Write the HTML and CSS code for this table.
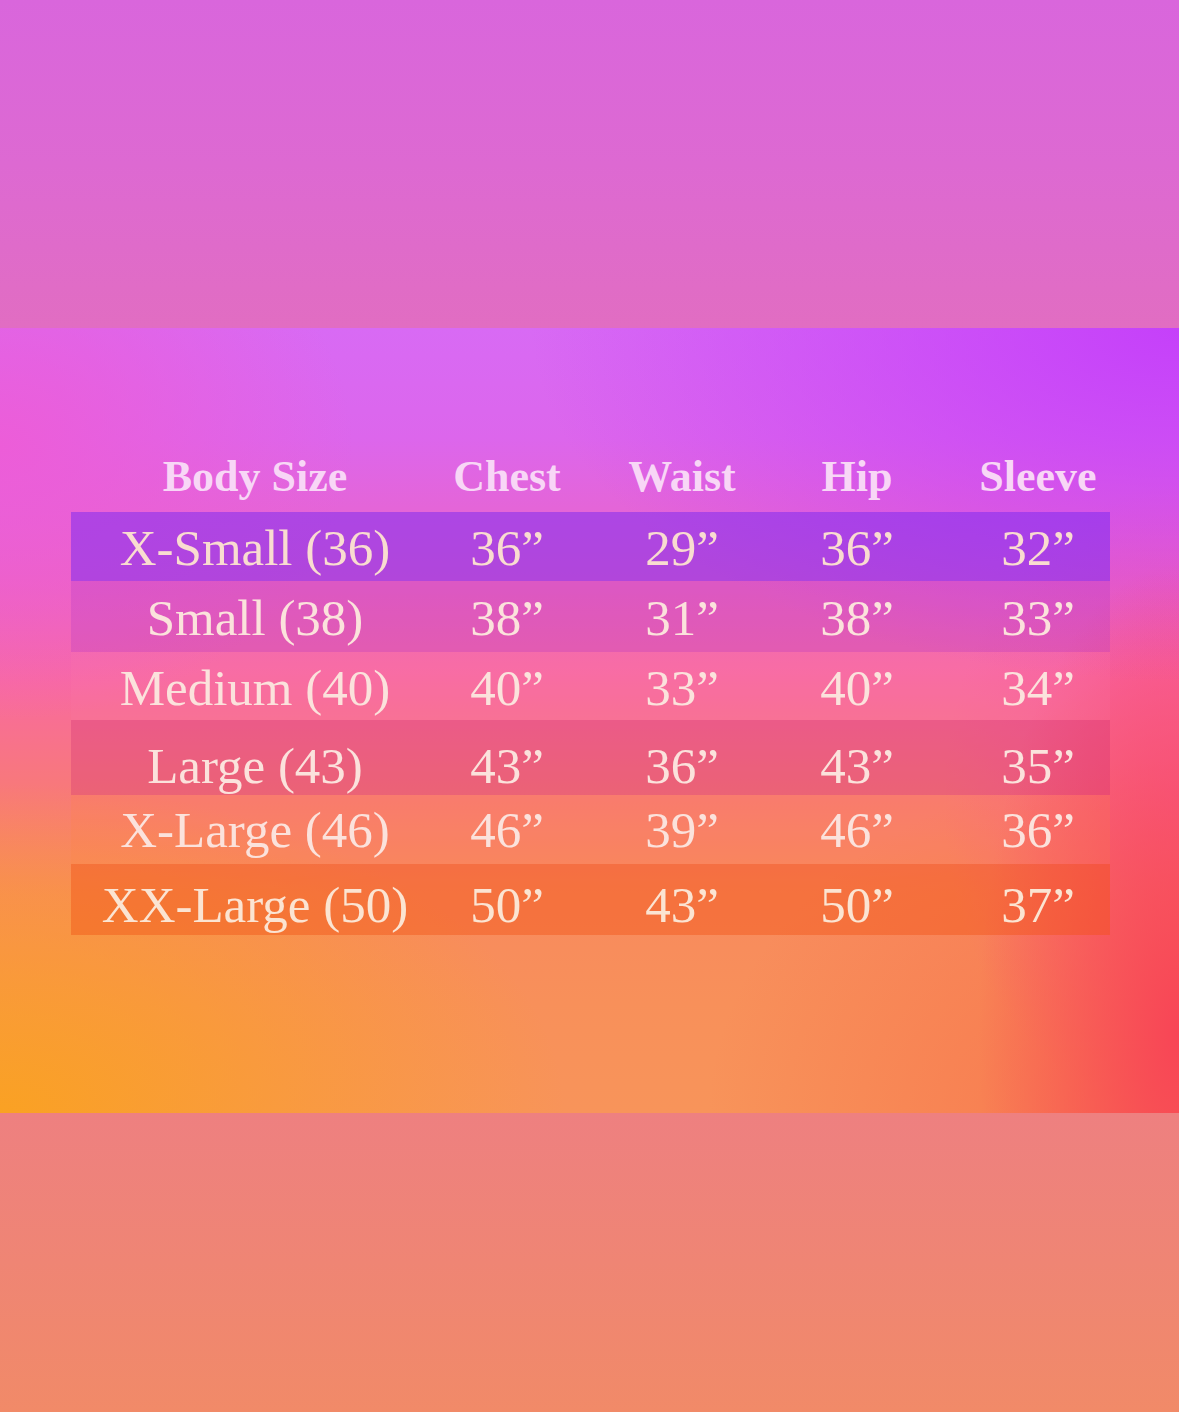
FILE: index.html
```html
<!DOCTYPE html>
<html lang="en">
<head>
<meta charset="utf-8">
<title>Size Chart</title>
<link rel="stylesheet" href="styles.css">
</head>
<body>
<div class="band band-top"></div>
<section class="chart">
  <div class="table">
    <div class="row head">
      <div class="cell">Body Size</div>
      <div class="cell">Chest</div>
      <div class="cell">Waist</div>
      <div class="cell">Hip</div>
      <div class="cell last">Sleeve</div>
    </div>
    <div class="row r1">
      <div class="cell">X-Small (36)</div>
      <div class="cell">36”</div>
      <div class="cell">29”</div>
      <div class="cell">36”</div>
      <div class="cell last">32”</div>
    </div>
    <div class="row r2">
      <div class="cell">Small (38)</div>
      <div class="cell">38”</div>
      <div class="cell">31”</div>
      <div class="cell">38”</div>
      <div class="cell last">33”</div>
    </div>
    <div class="row r3">
      <div class="cell">Medium (40)</div>
      <div class="cell">40”</div>
      <div class="cell">33”</div>
      <div class="cell">40”</div>
      <div class="cell last">34”</div>
    </div>
    <div class="row r4">
      <div class="cell">Large (43)</div>
      <div class="cell">43”</div>
      <div class="cell">36”</div>
      <div class="cell">43”</div>
      <div class="cell last">35”</div>
    </div>
    <div class="row r5">
      <div class="cell">X-Large (46)</div>
      <div class="cell">46”</div>
      <div class="cell">39”</div>
      <div class="cell">46”</div>
      <div class="cell last">36”</div>
    </div>
    <div class="row r6">
      <div class="cell">XX-Large (50)</div>
      <div class="cell">50”</div>
      <div class="cell">43”</div>
      <div class="cell">50”</div>
      <div class="cell last">37”</div>
    </div>
  </div>
</section>
<div class="band band-bottom"></div>
</body>
</html>
```

FILE: styles.css
```css
html, body {
  margin: 0;
  padding: 0;
}
body {
  width: 1179px;
  font-family: "Liberation Serif", "Times New Roman", serif;
  background: #e87a90;
}
.band-top {
  height: 328px;
  background: linear-gradient(180deg, #d966dc 0%, #dd69d2 50%, #e16dc2 100%);
}
.band-bottom {
  height: 299px;
  background: linear-gradient(180deg, #ee8080 0%, #ef8574 50%, #f18a68 100%);
}
.chart {
  height: 785px;
  box-sizing: border-box;
  padding: 124px 0 0 71px;
  background:
    radial-gradient(ellipse 17% 60% at 100% 90%, rgba(248, 66, 86, 0.95), rgba(248, 66, 86, 0) 100%),
    radial-gradient(ellipse 40% 45% at 100% 100%, rgba(248, 96, 70, 0.6), rgba(248, 96, 70, 0) 100%),
    radial-gradient(ellipse 48% 42% at 0% 100%, rgba(250, 162, 32, 0.95), rgba(250, 162, 32, 0) 100%),
    radial-gradient(ellipse 55% 45% at 100% 0%, rgba(196, 62, 250, 0.95), rgba(196, 62, 250, 0) 100%),
    radial-gradient(ellipse 30% 35% at 0% 15%, rgba(238, 92, 214, 0.9), rgba(238, 92, 214, 0) 100%),
    radial-gradient(ellipse 20% 40% at 100% 60%, rgba(248, 84, 150, 0.7), rgba(248, 84, 150, 0) 100%),
    linear-gradient(180deg, #d86af4 0%, #dc66ec 14%, #ec64c4 32%, #f86aa0 45%, #f8787c 58%, #f88a5e 72%, #f8905a 86%, #f8945a 100%);
}
.table {
  width: 1039px;
}
.row {
  display: grid;
  grid-template-columns: 368px 136px 214px 136px 1fr;
  box-sizing: border-box;
  line-height: 58px;
  font-size: 51px;
  color: #fbe2dc;
}
.cell {
  text-align: center;
  white-space: nowrap;
}
.cell.last {
  padding-left: 41px;
}
.head {
  height: 60px;
  line-height: 50px;
  font-size: 44px;
  font-weight: bold;
  color: #f8d6f6;
}
.r1 { height: 69px; padding-top: 7px; background: rgba(118, 40, 242, 0.5); color: #f9dcd0; }
.r2 { height: 71px; padding-top: 8px; background: rgba(170, 50, 200, 0.25); }
.r3 { height: 68px; padding-top: 7px; background: rgba(255, 128, 170, 0.12); }
.r4 { height: 75px; padding-top: 17px; background: rgba(200, 40, 110, 0.28); }
.r5 { height: 69px; padding-top: 6px; background: rgba(255, 135, 60, 0.18); }
.r6 { height: 71px; padding-top: 12px; background: rgba(240, 80, 20, 0.42); color: #fbe4d2; }
```
